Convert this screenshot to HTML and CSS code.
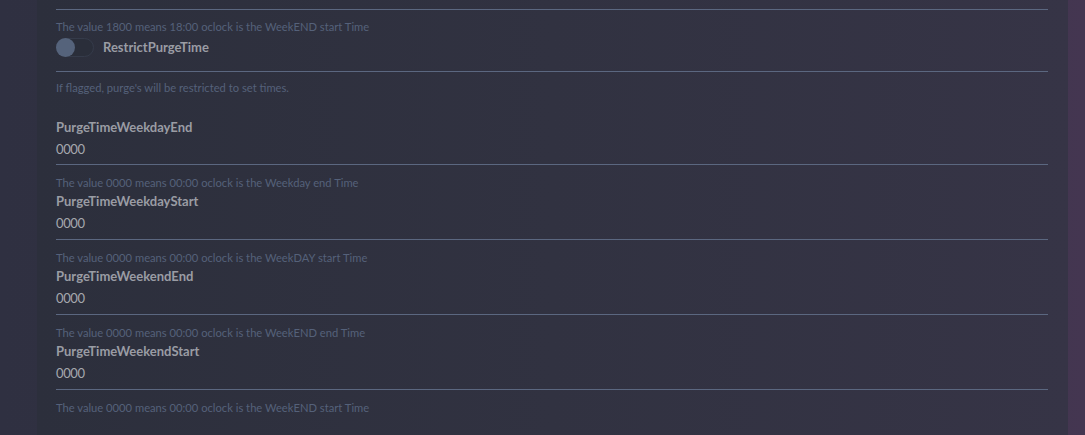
FILE: index.html
```html
<!DOCTYPE html>
<html>
<head>
<meta charset="utf-8">
<link rel="stylesheet" href="styles.css">
</head>
<body>
<div class="page">
  <main class="panel">
    <div class="field field-stub"></div>
    <p class="desc desc-first">The value 1800 means 18:00 oclock is the WeekEND start Time</p>
    <div class="field field-toggle">
      <span class="toggle"><span class="knob"></span></span>
      <span class="label">RestrictPurgeTime</span>
    </div>
    <p class="desc desc-flag">If flagged, purge's will be restricted to set times.</p>

    <div class="field field-first">
      <div class="label">PurgeTimeWeekdayEnd</div>
      <div class="value">0000</div>
    </div>
    <p class="desc">The value 0000 means 00:00 oclock is the Weekday end Time</p>

    <div class="field">
      <div class="label">PurgeTimeWeekdayStart</div>
      <div class="value">0000</div>
    </div>
    <p class="desc">The value 0000 means 00:00 oclock is the WeekDAY start Time</p>

    <div class="field">
      <div class="label">PurgeTimeWeekendEnd</div>
      <div class="value">0000</div>
    </div>
    <p class="desc">The value 0000 means 00:00 oclock is the WeekEND end Time</p>

    <div class="field">
      <div class="label">PurgeTimeWeekendStart</div>
      <div class="value">0000</div>
    </div>
    <p class="desc">The value 0000 means 00:00 oclock is the WeekEND start Time</p>
  </main>
</div>
</body>
</html>
```
FILE: styles.css
```css
html, body {
  margin: 0;
  padding: 0;
  height: 100%;
  overflow: hidden;
}
body {
  background: linear-gradient(90deg, #2f3041 0%, #363445 60%, #443651 100%);
  font-family: Lato, "Open Sans", sans-serif;
}
.page {
  display: flex;
  padding-left: 37px;
  padding-right: 17px;
  height: 100%;
}
.panel {
  flex: 1;
  background: linear-gradient(90deg, #2c2f3c 0%, #313241 50%, #363446 100%);
  padding: 0 20px 0 19px;
}
.field {
  border-bottom: 1px solid #5b6780;
  padding-bottom: 6px;
}
.field-stub {
  height: 9px;
  padding: 0;
}
.field-toggle {
  display: flex;
  align-items: center;
  gap: 9px;
  margin-top: 2px;
  padding-bottom: 14px;
}
.field-first {
  margin-top: 21px;
}
.field-first .value {
  margin-top: 2px;
}
.field-first {
  padding-bottom: 5px;
}
.desc {
  margin: 10px 0 0;
  font-size: 11.2px;
  line-height: 16px;
  color: #55617a;
}
.desc-first {
  margin-top: 9px;
}
.desc-flag {
  margin-top: 8px;
}
.label {
  font-size: 13px;
  font-weight: 700;
  line-height: 20px;
  color: #9a9ca4;
}
.value {
  margin-top: 2px;
  font-size: 13px;
  letter-spacing: -0.4px;
  font-variant-numeric: lining-nums;
  line-height: 20px;
  color: #a6a8ae;
}
.toggle {
  display: block;
  position: relative;
  width: 36px;
  height: 17px;
  border: 1px solid #353b4a;
  border-radius: 10px;
  background: #2a2e3a;
}
.knob {
  position: absolute;
  left: -1px;
  top: -1px;
  width: 19px;
  height: 19px;
  border-radius: 50%;
  background: #55637b;
}
```
